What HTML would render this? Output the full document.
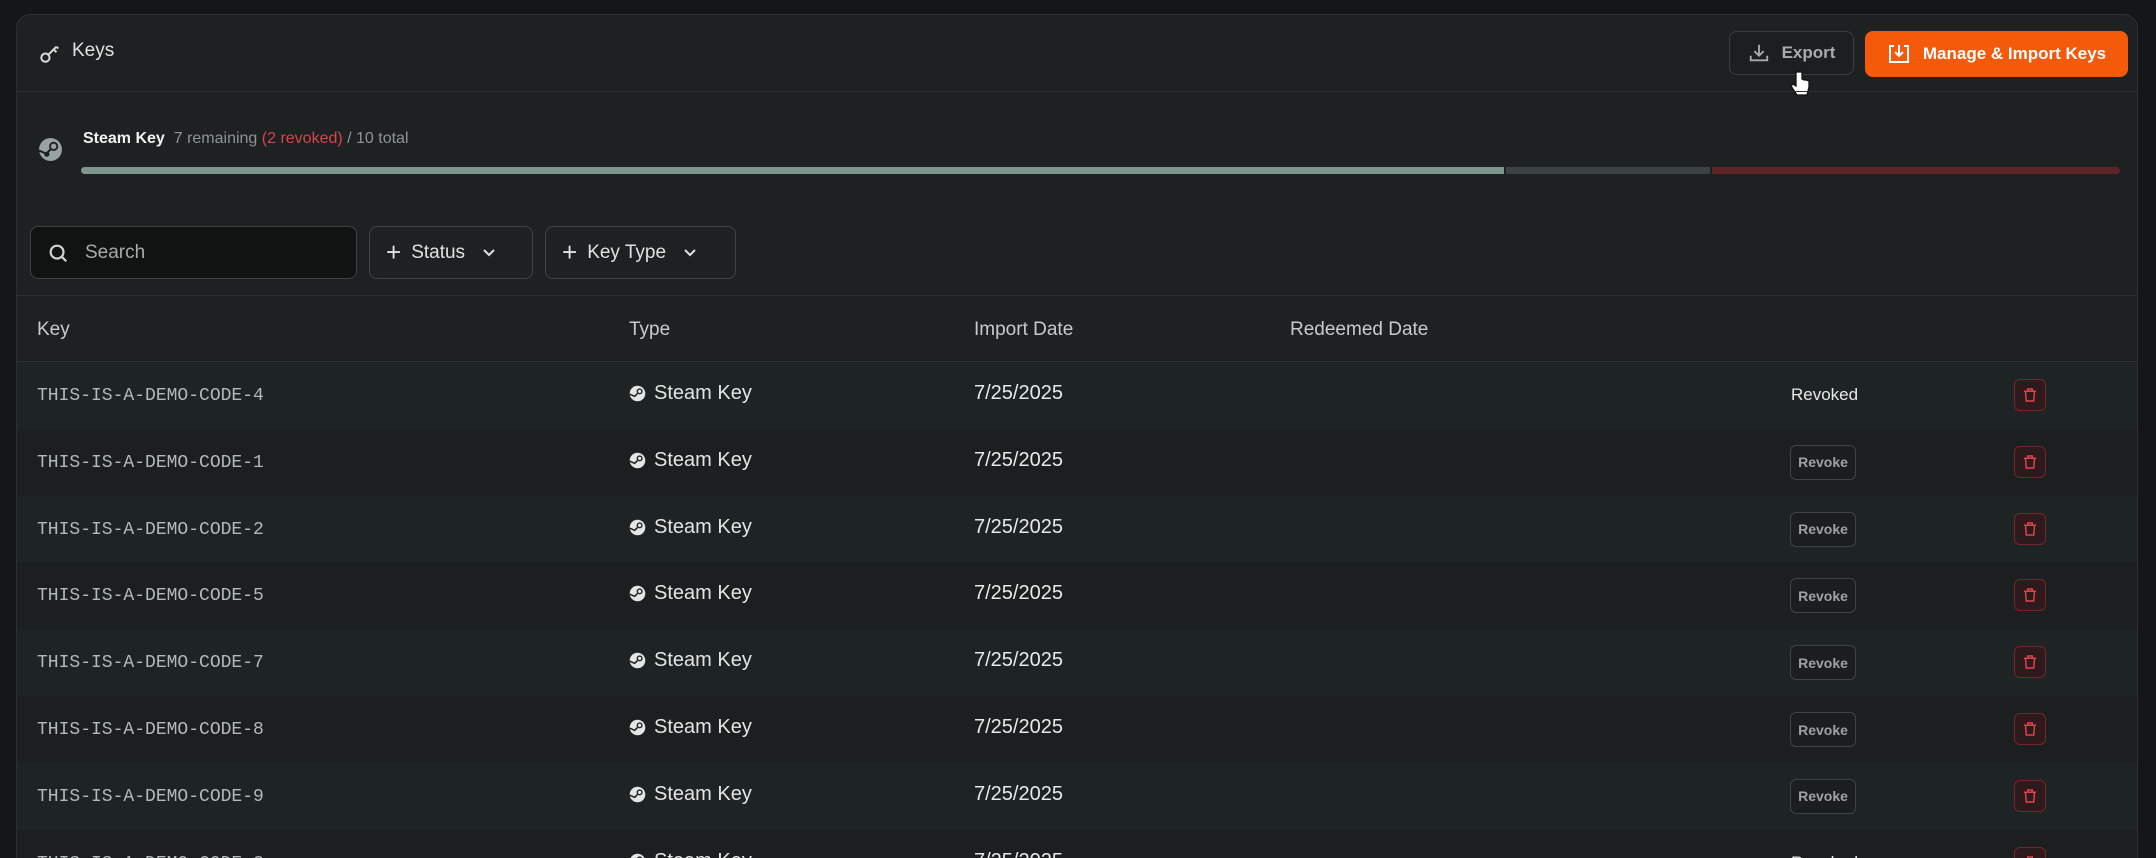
<!DOCTYPE html>
<html style="overflow:hidden;height:858px"><head><meta charset="utf-8"><style>
*{box-sizing:border-box;margin:0;padding:0}
body{width:2156px;height:858px;overflow:hidden;background:#141617;font-family:"Liberation Sans",sans-serif;color:#e6e8e8;position:relative}
.card{position:absolute;left:16px;top:14px;width:2122px;height:844px;background:#1e2121;border:1px solid #2c3030;border-bottom:none;border-radius:14px 14px 0 0;overflow:hidden}
.abs{position:absolute}
.btn{position:absolute;border-radius:8px;display:flex;align-items:center;justify-content:center;font-weight:bold;font-size:17px}
.row{position:absolute;left:0;width:2122px;height:67px}
.key{position:absolute;left:20px;font-family:"Liberation Mono",monospace;font-size:18px;color:#b3b8b8}
.type{position:absolute;left:612px;font-size:20px;color:#e4e6e6;display:flex;align-items:center;gap:8px}
.date{position:absolute;left:957px;font-size:20px;color:#e8eaea}
.rv{position:absolute;left:1773px;width:66px;height:35px;border:1px solid #3e4343;border-radius:6px;font-size:14px;font-weight:bold;color:#9ea2a2;display:flex;align-items:center;justify-content:center;background:#1b1e1e}
.rvd{position:absolute;left:1774px;font-size:17px;color:#e8eaea}
.tr{position:absolute;left:1997px;width:32px;height:32px;border:1px solid #7a232b;border-radius:6px;background:#2c1a1d;display:flex;align-items:center;justify-content:center}
</style></head><body>
<div class="card">
 <svg class="abs" style="left:22px;top:28px" width="22" height="22" viewBox="0 0 24 24" fill="none" stroke="#d8dada" stroke-width="2.2"><circle cx="7" cy="16" r="4.5"/><path d="M10.5 12.5L19 4M16 7l3 3M19 4l2 2"/></svg>
 <div class="abs" style="left:55px;top:25px;font-size:19px;color:#e0e2e2">Keys</div>
 <div class="btn" style="left:1712px;top:16px;width:125px;height:44px;border:1px solid #3a3e3e;color:#a8acac;background:#1c1f1f">
  <svg width="22" height="22" viewBox="0 0 24 24" fill="none" stroke="#a8acac" stroke-width="2" style="margin-right:12px"><path d="M12 3v12M7 10l5 5 5-5M3 15v5h18v-5"/></svg>Export</div>
 <div class="btn" style="left:1848px;top:16px;width:263px;height:46px;background:#f5590a;color:#fff">
  <svg width="24" height="22" viewBox="0 0 24 22" fill="none" stroke="#fff" stroke-width="2" style="margin-right:12px"><path d="M7 3H3v16h18V3h-4M12 2v11M8 9l4 4 4-4"/></svg>Manage &amp; Import Keys</div>
 <svg class="abs" style="left:1772px;top:54px" width="22" height="30" viewBox="0 0 22 30"><path d="M7 3v14l-3-2-2 2 6 9h10l2-8v-6l-3-1-2 0-2-1V3z" fill="#fff" stroke="#111" stroke-width="1.3"/></svg>
 <div class="abs" style="left:0;top:76px;width:2122px;height:1px;background:#2c3030"></div>
 <svg class="abs" style="left:21px;top:122px" width="25" height="25" viewBox="0 0 24 24"><circle cx="12" cy="12" r="11" fill="#9aa3a3"/><circle cx="15" cy="9" r="3.5" fill="none" stroke="#1e2121" stroke-width="1.8"/><path d="M1 13l7 3 4-4" stroke="#1e2121" stroke-width="2" fill="none"/><circle cx="8.5" cy="16.5" r="2.5" fill="#1e2121"/></svg>
 <div class="abs" style="left:66px;top:115px;font-size:16px;color:#8e9494"><b style="color:#f0f2f2">Steam Key</b>&nbsp; 7 remaining <span style="color:#d9434a">(2 revoked)</span> / 10 total</div>
 <div class="abs" style="left:64px;top:152px;width:2039px;height:7px;border-radius:4px;overflow:hidden;display:flex">
  <div style="width:1423px;background:#7e968d"></div><div style="width:2px"></div><div style="width:204px;background:#3b4342"></div><div style="width:2px"></div><div style="flex:1;background:#5e2428"></div>
 </div>
 <div class="abs" style="left:13px;top:211px;width:327px;height:53px;border:1px solid #3d4242;border-radius:8px;background:#111313;display:flex;align-items:center;padding-left:16px;font-size:19px;color:#a5aaaa">
  <svg width="22" height="22" viewBox="0 0 24 24" fill="none" stroke="#d0d3d3" stroke-width="2.4" style="margin-right:16px"><circle cx="11" cy="11" r="7"/><path d="M16 16l5 5"/></svg>Search</div>
 <div class="abs" style="left:352px;top:211px;width:164px;height:53px;border:1px solid #3d4242;border-radius:8px;display:flex;align-items:center;padding-left:16px;font-size:19px;color:#e0e2e2">
  <span style="font-size:26px;margin-right:10px;font-weight:300">+</span>Status<svg width="16" height="12" viewBox="0 0 16 12" style="margin-left:16px" fill="none" stroke="#e0e2e2" stroke-width="2"><path d="M3 3l5 5 5-5"/></svg></div>
 <div class="abs" style="left:528px;top:211px;width:191px;height:53px;border:1px solid #3d4242;border-radius:8px;display:flex;align-items:center;padding-left:16px;font-size:19px;color:#e0e2e2">
  <span style="font-size:26px;margin-right:10px;font-weight:300">+</span>Key Type<svg width="16" height="12" viewBox="0 0 16 12" style="margin-left:16px" fill="none" stroke="#e0e2e2" stroke-width="2"><path d="M3 3l5 5 5-5"/></svg></div>
 <div class="abs" style="left:0;top:280px;width:2122px;height:1px;background:#2c3030"></div>
 <div class="abs" style="left:20px;top:304px;font-size:19px;color:#c8cbcb">Key</div>
 <div class="abs" style="left:612px;top:304px;font-size:19px;color:#c8cbcb">Type</div>
 <div class="abs" style="left:957px;top:304px;font-size:19px;color:#c8cbcb">Import Date</div>
 <div class="abs" style="left:1273px;top:304px;font-size:19px;color:#c8cbcb">Redeemed Date</div>
 <div class="abs" style="left:0;top:346px;width:2122px;height:1px;background:#2c3030"></div>
 <div id="rows"></div>
</div>
<script>
var codes=[4,1,2,5,7,8,9,3];var h='';
for(var i=0;i<8;i++){var t=347+i*66.8;var bg=i%2?'#1c1f1f':'#1e2323';
h+='<div class="row" style="top:'+t+'px;background:'+bg+'">'+
'<div class="key" style="top:24px">THIS-IS-A-DEMO-CODE-'+codes[i]+'</div>'+
'<div class="type" style="top:20px"><svg width="17" height="17" viewBox="0 0 24 24"><circle cx="12" cy="12" r="11" fill="#e4e6e6"/><circle cx="15" cy="9" r="3.3" fill="none" stroke="#1e2121" stroke-width="2"/><path d="M1 13l7 3 4-4" stroke="#1e2121" stroke-width="2.2" fill="none"/></svg>Steam Key</div>'+
'<div class="date" style="top:20px">7/25/2025</div>'+
((i==0||i==7)?'<div class="rvd" style="top:23px">Revoked</div>':'<div class="rv" style="top:16px">Revoke</div>')+
'<div class="tr" style="top:17px"><svg width="18" height="18" viewBox="0 0 24 24" fill="none" stroke="#e0434c" stroke-width="2"><path d="M4 7h16M9 7V4h6v3M6 7l1 13h10l1-13"/></svg></div></div>';}
document.getElementById('rows').innerHTML=h;
</script>
</body></html>
